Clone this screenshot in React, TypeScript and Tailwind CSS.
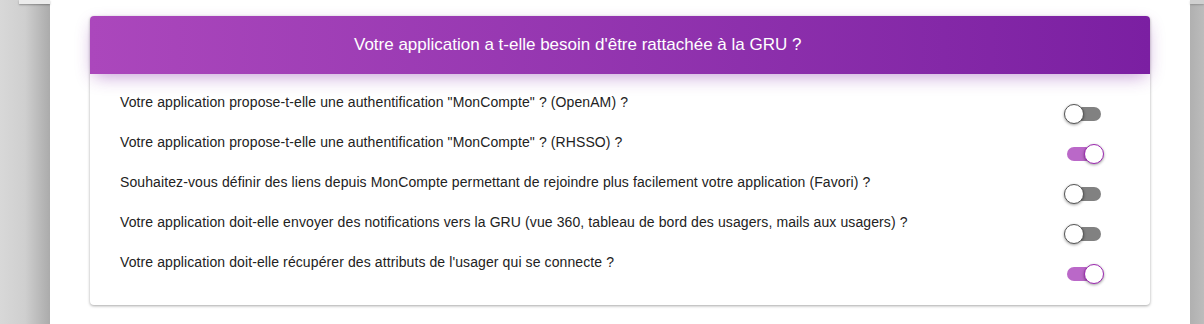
import React, { useState } from "react";

const questions = [
  { label: 'Votre application propose-t-elle une authentification "MonCompte" ? (OpenAM) ?', on: false },
  { label: 'Votre application propose-t-elle une authentification "MonCompte" ? (RHSSO) ?', on: true },
  { label: "Souhaitez-vous définir des liens depuis MonCompte permettant de rejoindre plus facilement votre application (Favori) ?", on: false },
  { label: "Votre application doit-elle envoyer des notifications vers la GRU (vue 360, tableau de bord des usagers, mails aux usagers) ?", on: false },
  { label: "Votre application doit-elle récupérer des attributs de l'usager qui se connecte ?", on: true },
];

function Toggle({ on, onClick }: { on: boolean; onClick: () => void }) {
  return (
    <button
      type="button"
      onClick={onClick}
      className="relative flex h-[20px] w-[40px] items-center justify-center"
    >
      <span
        className={
          on
            ? "block h-[14px] w-[34px] rounded-full bg-[#ba68c8]"
            : "block h-[14px] w-[34px] rounded-full bg-[#818181]"
        }
      />
      <span
        className={
          on
            ? "absolute left-[20px] top-0 h-[20px] w-[20px] rounded-full border-[1.5px] border-[#9c27b0] bg-white shadow-[0_1px_3px_rgba(0,0,0,0.4)]"
            : "absolute left-0 top-0 h-[20px] w-[20px] rounded-full border-[1.5px] border-[#555] bg-white shadow-[0_1px_3px_rgba(0,0,0,0.4)]"
        }
      />
    </button>
  );
}

export default function App() {
  const [vals, setVals] = useState(questions.map((q) => q.on));
  return (
    <div className="flex h-[324px] w-[1204px] overflow-hidden font-['Liberation_Sans',Arial,sans-serif]">
      <div className="relative w-[50px] shrink-0 bg-gradient-to-r from-[#d8d8d8] via-[#cfcfcf] to-[#ababab]">
        <div className="absolute left-[19px] top-0 h-[4px] w-[31px] bg-[#ececec] shadow-[0_1px_2px_rgba(0,0,0,0.3)]" />
      </div>
      <div className="w-[1140px] shrink-0 bg-white px-[40px] pt-[16px]">
        <div className="overflow-visible rounded-[4px] bg-white shadow-[0_1px_3px_rgba(0,0,0,0.35)]">
          <div className="relative z-10 flex h-[58px] items-center rounded-t-[4px] bg-gradient-to-r from-[#ab47bc] to-[#7b1fa2] pl-[264px] text-[17px] text-white shadow-[0_6px_18px_-4px_rgba(123,31,162,0.45)]">
            Votre application a t-elle besoin d'être rattachée à la GRU ?
          </div>
          <div className="pb-[13px] pl-[30px] pr-[46px] pt-[18px]">
            {questions.map((q, i) => (
              <div key={i} className="flex h-[40px] justify-between">
                <div className="self-start text-[14px] leading-[20px] tracking-[0.1px] text-[#222]">{q.label}</div>
                <div className="self-end pb-[8px]">
                  <Toggle
                    on={vals[i]}
                    onClick={() => setVals(vals.map((v, j) => (j === i ? !v : v)))}
                  />
                </div>
              </div>
            ))}
          </div>
        </div>
      </div>
      <div className="relative flex-1 bg-gradient-to-r from-[#b0b0b0] to-[#bcbcbc]">
        <div className="absolute left-0 right-0 top-0 h-[4px] bg-[#d0d0d0] shadow-[0_1px_2px_rgba(0,0,0,0.2)]" />
      </div>
    </div>
  );
}
